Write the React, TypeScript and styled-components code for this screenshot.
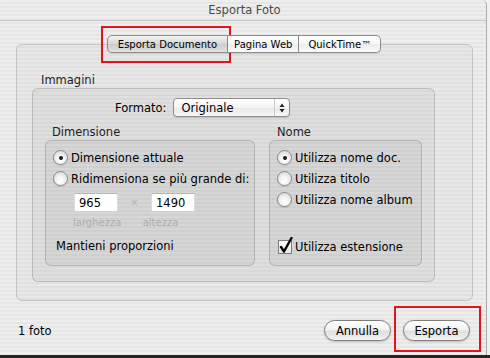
import { FC, PropsWithChildren } from 'react';
import styled, { createGlobalStyle } from 'styled-components';

const GlobalStyle = createGlobalStyle`
  html, body {
    margin: 0;
    padding: 0;
  }
  body {
    width: 490px;
    height: 358px;
    overflow: hidden;
    background: linear-gradient(to bottom, #f1f1f1 355px, #2a231e 355px);
    font-family: "DejaVu Sans", "Liberation Sans", sans-serif;
    font-size: 11.5px;
    color: #000000;
  }
`;

const pinstripe = `repeating-linear-gradient(
  to bottom,
  #eeeeee 0px,
  #eeeeee 2px,
  #e6e6e6 2px,
  #e6e6e6 4px
)`;

const Window = styled.div`
  position: relative;
  width: 486px;
  height: 355px;
  border-right: 1px solid #a9a9a9;
  border-radius: 5px 5px 0 0;
  background: ${pinstripe};
  display: flex;
  flex-direction: column;
  box-sizing: content-box;
`;

const TitleBar = styled.div`
  height: 20px;
  border-bottom: 1px solid #c4c4c4;
  display: flex;
  align-items: center;
  justify-content: center;
  color: #4a4a4a;
  font-size: 11.5px;
  padding-left: 3px;
`;

const Body = styled.div`
  flex: 1;
  display: flex;
  flex-direction: column;
  padding: 14px 13px 0 16px;
`;

const TabRow = styled.div`
  position: relative;
  z-index: 1;
  display: flex;
  justify-content: center;
  margin-bottom: -9px;
  padding-right: 1px;
`;

const Tab = styled.div<{ $active?: boolean; $pos: 'first' | 'mid' | 'last' }>`
  height: 16px;
  padding: 0 ${(p) => (p.$pos === 'first' ? 10 : p.$pos === 'last' ? 9 : 6)}px;
  display: flex;
  align-items: center;
  font-size: 10px;
  color: #000;
  border: 1px solid #8c8c8c;
  border-left: ${(p) => (p.$pos === 'first' ? '1px solid #8c8c8c' : 'none')};
  border-radius: ${(p) =>
    p.$pos === 'first' ? '5px 0 0 5px' : p.$pos === 'last' ? '0 5px 5px 0' : '0'};
  background: ${(p) =>
    p.$active
      ? 'linear-gradient(to bottom, #f4f4f4 0%, #d6d6d6 50%, #cbcbcb 51%, #e2e2e2 100%)'
      : 'linear-gradient(to bottom, #ffffff 0%, #f6f6f6 50%, #ececec 51%, #fafafa 100%)'};
  box-shadow: 0 1px 1px rgba(0, 0, 0, 0.12);
`;

const TabBox = styled.div`
  height: 257px;
  box-sizing: border-box;
  border: 1px solid #c3c3c3;
  border-radius: 6px;
  background: rgba(0, 0, 0, 0.025);
  padding: 28px 37px 0 15px;
  display: flex;
  flex-direction: column;
`;

const GroupLabel = styled.div<{ $inset: number }>`
  height: 14px;
  line-height: 14px;
  padding-left: ${(p) => p.$inset}px;
  color: #1e1e1e;
  margin-bottom: 1px;
`;

const GroupBox = styled.div<{ $tone: number }>`
  border: 1px solid rgba(0, 0, 0, 0.16);
  border-radius: 6px;
  background: rgba(0, 0, 0, ${(p) => p.$tone});
  box-sizing: border-box;
`;

const ImagesBox = styled(GroupBox)`
  height: 194px;
  padding: 9px 12px 0 12px;
  display: flex;
  flex-direction: column;
`;

const FormatRow = styled.div`
  display: flex;
  align-items: center;
  height: 19px;
  padding-left: 70px;
  gap: 7px;
`;

const Popup = styled.div`
  width: 115px;
  height: 17px;
  border: 1px solid #8e8e8e;
  border-radius: 4px;
  background: linear-gradient(to bottom, #ffffff 0%, #f4f4f4 50%, #e8e8e8 51%, #f7f7f7 100%);
  display: flex;
  align-items: center;
  box-shadow: 0 1px 1px rgba(0, 0, 0, 0.15);
`;

const PopupText = styled.span`
  flex: 1;
  padding-left: 7px;
`;

const PopupArrows = styled.span`
  width: 14px;
  height: 100%;
  border-left: 1px solid #c9c9c9;
  display: flex;
  align-items: center;
  justify-content: center;
`;

const Columns = styled.div`
  display: flex;
  gap: 14px;
  margin-top: 8px;
`;

const Column = styled.div<{ $width: number }>`
  width: ${(p) => p.$width}px;
  display: flex;
  flex-direction: column;
`;

const InnerBox = styled(GroupBox)`
  height: 126px;
  padding: 6px 7px 8px 7px;
  display: flex;
  flex-direction: column;
`;

const OptionRow = styled.div<{ $push?: boolean }>`
  height: 21px;
  display: flex;
  align-items: center;
  gap: 3px;
  margin-top: ${(p) => (p.$push ? 'auto' : '0')};
  white-space: nowrap;
`;

const RadioCircle = styled.span<{ $on?: boolean }>`
  width: 13px;
  height: 13px;
  border-radius: 50%;
  border: 1px solid #8a8a8a;
  background: radial-gradient(circle at 50% 70%, #ffffff 0%, #f0f0f0 45%, #d2d2d2 100%);
  display: flex;
  align-items: center;
  justify-content: center;
  flex-shrink: 0;
  box-shadow: 0 1px 1px rgba(0, 0, 0, 0.12);
  &::after {
    content: '';
    width: 4px;
    height: 4px;
    border-radius: 50%;
    background: #1a1a1a;
    display: ${(p) => (p.$on ? 'block' : 'none')};
  }
`;

const CheckSquare = styled.span`
  position: relative;
  width: 12px;
  height: 12px;
  border: 1px solid #7e7e7e;
  background: linear-gradient(to bottom, #ffffff, #e4e4e4);
  flex-shrink: 0;
  margin-left: 1px;
  svg {
    position: absolute;
    left: 0px;
    top: -4px;
  }
`;

const SizeRow = styled.div`
  display: flex;
  align-items: center;
  margin-top: 4px;
  padding-left: 21px;
`;

const SizeField = styled.div`
  width: 44px;
  height: 18px;
  background: #ffffff;
  border-top: 1px solid #b5b5b5;
  border-left: 1px solid #dcdcdc;
  border-right: 1px solid #dcdcdc;
  display: flex;
  align-items: center;
  padding-left: 4px;
  box-sizing: border-box;
`;

const Times = styled.span`
  width: 33px;
  text-align: center;
  color: #b5b5b5;
  font-size: 10px;
`;

const HintRow = styled.div`
  display: flex;
  padding-left: 20px;
  margin-top: 6px;
  color: #acacac;
  font-size: 10px;
  line-height: 12px;
`;

const Hint = styled.span<{ $width: number }>`
  width: ${(p) => p.$width}px;
  text-align: center;
`;

const PlainRow = styled.div`
  margin-top: auto;
  height: 21px;
  line-height: 21px;
  padding-left: 3px;
`;

const Footer = styled.div`
  display: flex;
  align-items: center;
  padding: 19px 3px 0 2px;
`;

const Count = styled.div`
  flex: 1;
`;

const Buttons = styled.div`
  display: flex;
  gap: 12px;
`;

const Button = styled.button`
  width: 67px;
  height: 21px;
  border: 1px solid #7d7d7d;
  border-radius: 11px;
  background: linear-gradient(to bottom, #ffffff 0%, #f1f1f1 48%, #dedede 52%, #f3f3f3 100%);
  box-shadow: 0 1px 2px rgba(0, 0, 0, 0.2);
  font-family: inherit;
  font-size: 11.5px;
  color: #000;
  padding: 0;
`;

const Highlight = styled.div<{ $x: number; $y: number; $w: number; $h: number }>`
  position: absolute;
  left: ${(p) => p.$x}px;
  top: ${(p) => p.$y}px;
  width: ${(p) => p.$w}px;
  height: ${(p) => p.$h}px;
  border: 2px solid #e3151a;
  box-sizing: border-box;
  pointer-events: none;
`;

const Radio: FC<PropsWithChildren<{ on?: boolean }>> = ({ on, children }) => (
  <OptionRow>
    <RadioCircle $on={on} />
    <span>{children}</span>
  </OptionRow>
);

const App: FC = () => (
  <>
    <GlobalStyle />
    <Window>
      <TitleBar>Esporta Foto</TitleBar>
      <Body>
        <TabRow>
          <Tab $active $pos="first">Esporta Documento</Tab>
          <Tab $pos="mid">Pagina Web</Tab>
          <Tab $pos="last">QuickTime™</Tab>
        </TabRow>
        <TabBox>
          <GroupLabel $inset={9}>Immagini</GroupLabel>
          <ImagesBox $tone={0.035}>
            <FormatRow>
              <span>Formato:</span>
              <Popup>
                <PopupText>Originale</PopupText>
                <PopupArrows>
                  <svg width="6" height="10" viewBox="0 0 6 10">
                    <path d="M3 0.5 L5.5 4 L0.5 4 Z" fill="#222" />
                    <path d="M3 9.5 L5.5 6 L0.5 6 Z" fill="#222" />
                  </svg>
                </PopupArrows>
              </Popup>
            </FormatRow>
            <Columns>
              <Column $width={210}>
                <GroupLabel $inset={7}>Dimensione</GroupLabel>
                <InnerBox $tone={0.04}>
                  <Radio on>Dimensione attuale</Radio>
                  <Radio>Ridimensiona se più grande di:</Radio>
                  <SizeRow>
                    <SizeField>965</SizeField>
                    <Times>×</Times>
                    <SizeField>1490</SizeField>
                  </SizeRow>
                  <HintRow>
                    <Hint $width={47}>larghezza</Hint>
                    <Hint $width={81}>altezza</Hint>
                  </HintRow>
                  <PlainRow>Mantieni proporzioni</PlainRow>
                </InnerBox>
              </Column>
              <Column $width={153}>
                <GroupLabel $inset={8}>Nome</GroupLabel>
                <InnerBox $tone={0.04}>
                  <Radio on>Utilizza nome doc.</Radio>
                  <Radio>Utilizza titolo</Radio>
                  <Radio>Utilizza nome album</Radio>
                  <OptionRow $push>
                    <CheckSquare>
                      <svg width="14" height="17" viewBox="0 0 14 17">
                        <path
                          d="M2 10 L5 14.5 L12.5 1"
                          fill="none"
                          stroke="#000"
                          strokeWidth="2.4"
                          strokeLinecap="round"
                          strokeLinejoin="round"
                        />
                      </svg>
                    </CheckSquare>
                    <span>Utilizza estensione</span>
                  </OptionRow>
                </InnerBox>
              </Column>
            </Columns>
          </ImagesBox>
        </TabBox>
        <Footer>
          <Count>1 foto</Count>
          <Buttons>
            <Button>Annulla</Button>
            <Button>Esporta</Button>
          </Buttons>
        </Footer>
      </Body>
      <Highlight $x={101} $y={26} $w={130} $h={37} />
      <Highlight $x={394} $y={306} $w={87} $h={46} />
    </Window>
  </>
);

export default App;
